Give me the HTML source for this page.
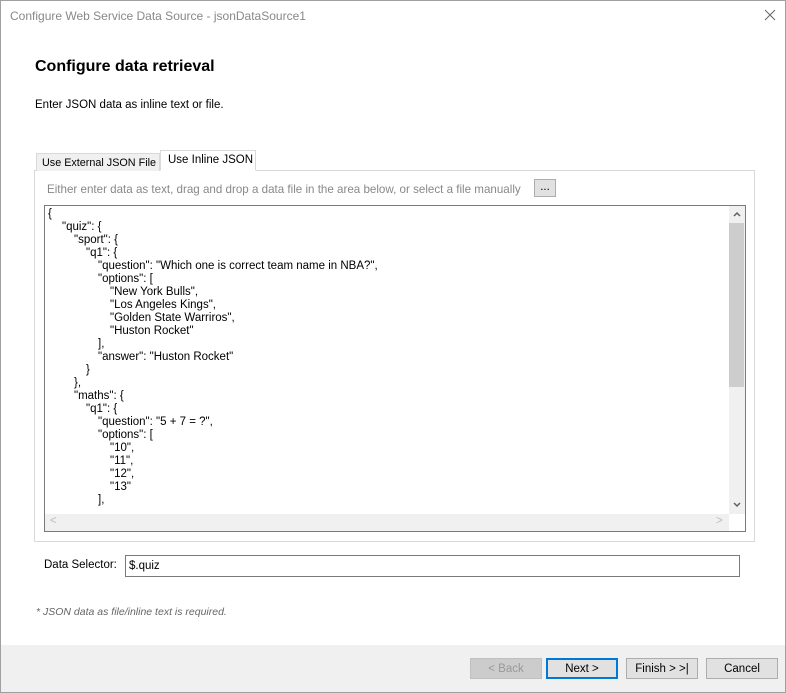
<!DOCTYPE html>
<html><head><style>
*{margin:0;padding:0;box-sizing:border-box}
body{width:786px;height:693px;background:#fff;font-family:"Liberation Sans",sans-serif;font-size:11.5px;color:#000;position:relative;overflow:hidden}
.win{position:absolute;left:0;top:0;width:786px;height:693px;border:1px solid #a0a0a0}
.a{position:absolute;white-space:nowrap}
.code{position:absolute;left:48px;top:208px;font-size:11.5px;line-height:13px;white-space:nowrap}
.code div{height:13px}
.l1{padding-left:14px}.l2{padding-left:26px}.l3{padding-left:38px}.l4{padding-left:50px}.l5{padding-left:62px}
.btn{position:absolute;top:658px;width:72px;height:21px;border:1px solid #adadad;background:#e1e1e1;text-align:center;line-height:20px;font-size:11.5px}
</style></head><body>
<div class="win"></div>
<div class="a" style="left:10px;top:9px;color:#888;font-size:12px">Configure Web Service Data Source - jsonDataSource1</div>
<svg class="a" style="left:764px;top:9px" width="12" height="12"><path d="M1 1L11 11M11 1L1 11" stroke="#666" stroke-width="1"/></svg>
<div class="a" style="left:35px;top:58px;font-size:16px;font-weight:bold">Configure data retrieval</div>
<div class="a" style="left:35px;top:99px">Enter JSON data as inline text or file.</div>
<div class="a" style="left:34px;top:170px;width:721px;height:372px;border:1px solid #d9d9d9"></div>
<div class="a" style="left:36px;top:153px;width:124px;height:18px;background:#f0f0f0;border:1px solid #d9d9d9;border-bottom:none;padding:3px 0 0 5px;font-size:10.8px">Use External JSON File</div>
<div class="a" style="left:160px;top:150px;width:96px;height:21px;background:#fff;border:1px solid #d9d9d9;border-bottom:1px solid #fff;padding:3px 0 0 7px;font-size:11.5px">Use Inline JSON</div>
<div class="a" style="left:47px;top:183px;color:#888;font-size:11.6px">Either enter data as text, drag and drop a data file in the area below, or select a file manually</div>
<div class="a" style="left:534px;top:179px;width:22px;height:18px;background:#e1e1e1;border:1px solid #adadad;text-align:center;line-height:14px">...</div>
<div class="a" style="left:44px;top:205px;width:702px;height:327px;border:1px solid #7a7a7a;background:#fff"></div>
<div class="a" style="left:729px;top:206px;width:16px;height:308px;background:#f0f0f0"></div>
<div class="a" style="left:729px;top:223px;width:15px;height:164px;background:#cdcdcd"></div>
<svg class="a" style="left:733px;top:211px" width="8" height="6"><path d="M1 5L4 2L7 5" stroke="#606060" stroke-width="1.5" fill="none"/></svg>
<svg class="a" style="left:733px;top:502px" width="8" height="6"><path d="M1 1L4 4L7 1" stroke="#606060" stroke-width="1.5" fill="none"/></svg>
<div class="a" style="left:45px;top:514px;width:684px;height:17px;background:#f0f0f0"></div>
<div class="a" style="left:50px;top:515px;color:#bbb">&lt;</div>
<div class="a" style="left:716px;top:515px;color:#bbb">&gt;</div>
<div class="code"><div>{</div><div class="l1">"quiz": {</div><div class="l2">"sport": {</div><div class="l3">"q1": {</div><div class="l4">"question": "Which one is correct team name in NBA?",</div><div class="l4">"options": [</div><div class="l5">"New York Bulls",</div><div class="l5">"Los Angeles Kings",</div><div class="l5">"Golden State Warriros",</div><div class="l5">"Huston Rocket"</div><div class="l4">],</div><div class="l4">"answer": "Huston Rocket"</div><div class="l3">}</div><div class="l2">},</div><div class="l2">"maths": {</div><div class="l3">"q1": {</div><div class="l4">"question": "5 + 7 = ?",</div><div class="l4">"options": [</div><div class="l5">"10",</div><div class="l5">"11",</div><div class="l5">"12",</div><div class="l5">"13"</div><div class="l4">],</div></div>
<div class="a" style="left:44px;top:559px;font-size:11.5px">Data Selector:</div>
<div class="a" style="left:125px;top:555px;width:615px;height:22px;border:1px solid #7a7a7a;padding:4px 0 0 3px;font-size:11.5px">$.quiz</div>
<div class="a" style="left:36px;top:606px;color:#666;font-style:italic;font-size:10.5px">* JSON data as file/inline text is required.</div>
<div class="a" style="left:1px;top:645px;width:784px;height:47px;background:#f0f0f0"></div>
<div class="btn" style="left:470px;background:#ccc;border-color:#bfbfbf;color:#999">&lt; Back</div>
<div class="btn" style="left:546px;border:2px solid #0078d7;line-height:18px">Next &gt;</div>
<div class="btn" style="left:626px">Finish &gt; &gt;|</div>
<div class="btn" style="left:706px">Cancel</div>
</body></html>
